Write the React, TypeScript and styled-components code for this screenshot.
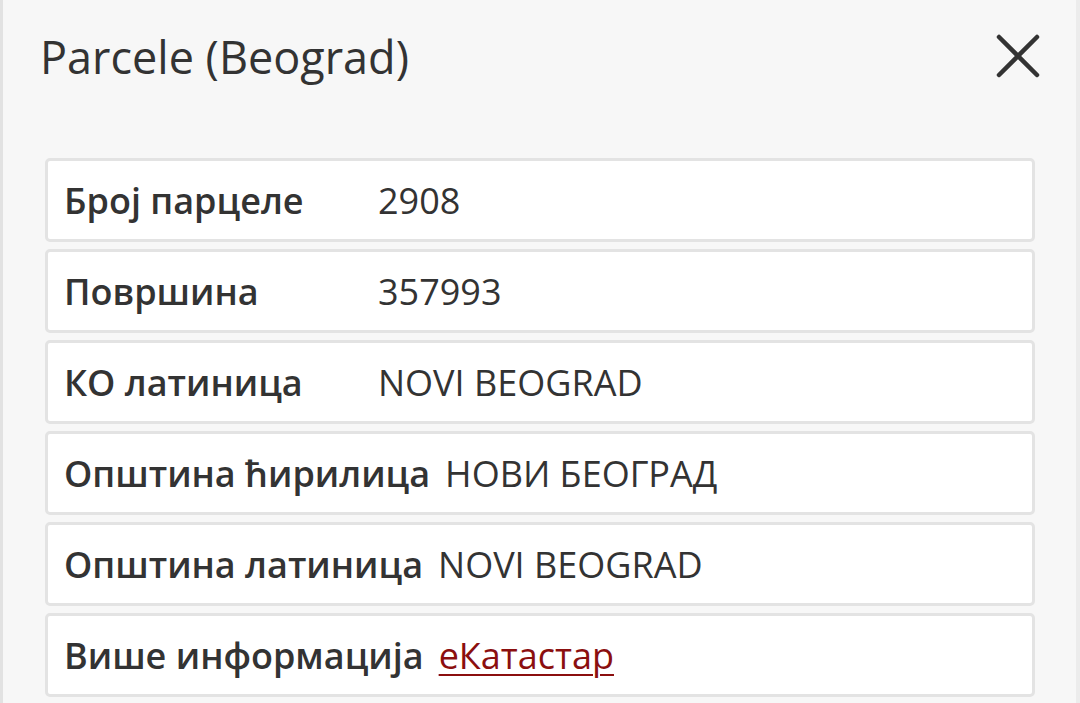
import React from "react";
import styled, { createGlobalStyle } from "styled-components";

const Global = createGlobalStyle`
  html, body { margin: 0; padding: 0; background: #f7f7f7; }
  body { font-family: "Open Sans", "Noto Sans", sans-serif; color: #333; }
`;

const Panel = styled.div`
  box-sizing: border-box;
  width: 1080px;
  height: 703px;
  overflow: hidden;
  background: #f7f7f7;
  border-left: 3px solid #e2e2e2;
  border-right: 4px solid #ececec;
  display: flex;
  flex-direction: column;
`;

const Header = styled.div`
  display: flex;
  align-items: center;
  justify-content: space-between;
  height: 116px;
  padding: 0 36px 0 37px;
  box-sizing: border-box;
`;

const Title = styled.h1`
  margin: 0;
  font-size: 45px;
  font-weight: 400;
  line-height: 1;
  color: #333;
  transform: translateY(-2px);
`;

const CloseButton = styled.button`
  border: none;
  background: none;
  padding: 0;
  width: 44px;
  height: 44px;
  display: flex;
  align-items: center;
  justify-content: center;
  cursor: pointer;
  transform: translateY(-2px);
`;

const Rows = styled.div`
  display: flex;
  flex-direction: column;
  gap: 7px;
  padding: 42px 41px 0 42px;
`;

const Row = styled.div`
  display: flex;
  align-items: center;
  height: 84px;
  box-sizing: border-box;
  background: #fff;
  border: 3px solid #e3e3e3;
  border-radius: 5px;
  padding: 0 16px;
  gap: 15px;
  font-size: 36px;
`;

const Label = styled.span`
  font-weight: 600;
  min-width: 299px;
  white-space: nowrap;
`;

const Value = styled.span`
  font-weight: 400;
  white-space: nowrap;
`;

const Link = styled.a`
  color: #8b0f0f;
  text-decoration: underline;
  text-underline-offset: 5px;
  text-decoration-thickness: 2px;
`;

const rows: { label: string; value: string; link?: boolean }[] = [
  { label: "Број парцеле", value: "2908" },
  { label: "Површина", value: "357993" },
  { label: "КО латиница", value: "NOVI BEOGRAD" },
  { label: "Општина ћирилица", value: "НОВИ БЕОГРАД" },
  { label: "Општина латиница", value: "NOVI BEOGRAD" },
  { label: "Више информација", value: "еКатастар", link: true },
];

export default function App() {
  return (
    <>
      <Global />
      <Panel>
        <Header>
          <Title>Parcele (Beograd)</Title>
          <CloseButton aria-label="close">
            <svg width="44" height="44" viewBox="0 0 44 44">
              <path d="M3 3 L41 41 M41 3 L3 41" stroke="#333" strokeWidth="4.5" strokeLinecap="round" />
            </svg>
          </CloseButton>
        </Header>
        <Rows>
          {rows.map((r) => (
            <Row key={r.label}>
              <Label>{r.label}</Label>
              <Value>{r.link ? <Link href="#">{r.value}</Link> : r.value}</Value>
            </Row>
          ))}
        </Rows>
      </Panel>
    </>
  );
}
